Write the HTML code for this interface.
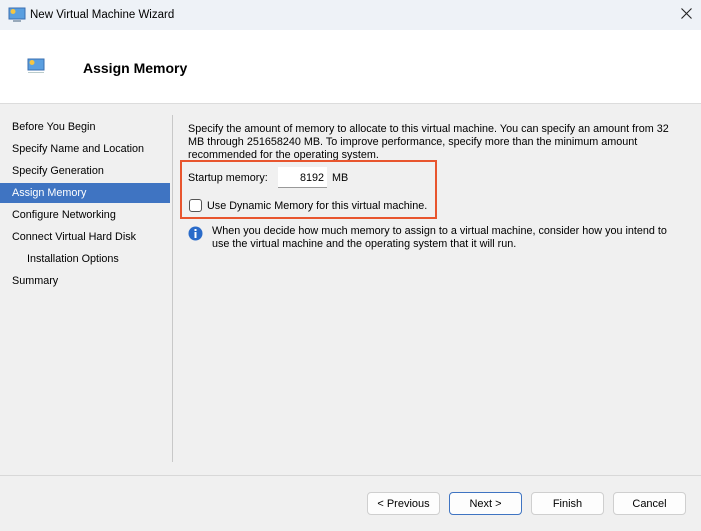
<!DOCTYPE html><html><head><style>
*{margin:0;padding:0;box-sizing:border-box}
body{width:701px;height:531px;background:#f0f0f0;font-family:"Liberation Sans",sans-serif;font-size:10.8px;color:#000;position:relative;overflow:hidden}
.a{position:absolute}
.title{left:0;top:0;width:701px;height:30px;background:#eef2f7}
.hdr{left:0;top:30px;width:701px;height:74px;background:#fff;border-bottom:1px solid #dcdcdc}
.nav div{position:absolute;left:0;width:170px;height:20px;line-height:21px;padding-left:12px}
.btn{top:492px;height:23px;width:73px;border:1px solid #cfcfcf;border-radius:4px;background:#fdfdfd;text-align:center;line-height:22px;font-size:11px}
</style></head><body>
<div class="a title"></div>
<svg class="a" style="left:8px;top:7px" width="18" height="16"><rect x="1" y="1" width="16" height="11" fill="#5a9fe0" stroke="#3a6fb0"/><circle cx="5" cy="4.5" r="2.5" fill="#f5c542"/><rect x="5" y="13" width="8" height="2" fill="#9ab"/></svg>
<div class="a" style="left:30px;top:9px;font-size:11.5px">New Virtual Machine Wizard</div>
<svg class="a" style="left:681px;top:8px" width="11" height="11"><path d="M0.5 0.5L10.5 10.5M10.5 0.5L0.5 10.5" stroke="#222" stroke-width="1.1"/></svg>
<div class="a hdr"></div>
<svg class="a" style="left:27px;top:58px" width="18" height="16"><rect x="1" y="1" width="16" height="11" fill="#5a9fe0" stroke="#3a6fb0"/><circle cx="5" cy="4.5" r="2.5" fill="#f5c542"/><rect x="1" y="14" width="16" height="1" fill="#bcc"/></svg>
<div class="a" style="left:83px;top:60px;font-size:14px;font-weight:bold">Assign Memory</div>
<div class="nav">
<div style="top:117px">Before You Begin</div>
<div style="top:139px">Specify Name and Location</div>
<div style="top:161px">Specify Generation</div>
<div style="top:183px;background:#3f74c2;color:#fff">Assign Memory</div>
<div style="top:205px">Configure Networking</div>
<div style="top:227px">Connect Virtual Hard Disk</div>
<div style="top:249px;padding-left:27px">Installation Options</div>
<div style="top:271px">Summary</div>
</div>
<div class="a" style="left:172px;top:115px;width:1px;height:347px;background:#c8c8c8"></div>
<div class="a" style="left:188px;top:123px;width:510px;line-height:13px;white-space:nowrap">Specify the amount of memory to allocate to this virtual machine. You can specify an amount from 32<br>MB through 251658240 MB. To improve performance, specify more than the minimum amount<br>recommended for the operating system.</div>
<div class="a" style="left:180px;top:160px;width:257px;height:59px;border:2px solid #e8552e"></div>
<div class="a" style="left:188px;top:172px">Startup memory:</div>
<div class="a" style="left:278px;top:167px;width:49px;height:21px;background:#fff;border-bottom:1px solid #999;text-align:right;padding-right:3px;line-height:22px">8192</div>
<div class="a" style="left:332px;top:172px">MB</div>
<div class="a" style="left:189px;top:199px;width:13px;height:13px;border:1px solid #555;border-radius:3px;background:#fff"></div>
<div class="a" style="left:207px;top:200px">Use Dynamic Memory for this virtual machine.</div>
<svg class="a" style="left:188px;top:226px" width="15" height="15"><circle cx="7.5" cy="7.5" r="7" fill="#2a6bc9"/><rect x="6.5" y="6" width="2" height="6" fill="#fff"/><rect x="6.5" y="3" width="2" height="2" fill="#fff"/></svg>
<div class="a" style="left:212px;top:225px;width:480px;line-height:13px;white-space:nowrap">When you decide how much memory to assign to a virtual machine, consider how you intend to<br>use the virtual machine and the operating system that it will run.</div>
<div class="a" style="left:0;top:475px;width:701px;height:1px;background:#d8d8d8"></div>
<div class="a btn" style="left:367px">&lt; Previous</div>
<div class="a btn" style="left:449px;border-color:#3f74c2">Next &gt;</div>
<div class="a btn" style="left:531px">Finish</div>
<div class="a btn" style="left:613px">Cancel</div>
</body></html>
